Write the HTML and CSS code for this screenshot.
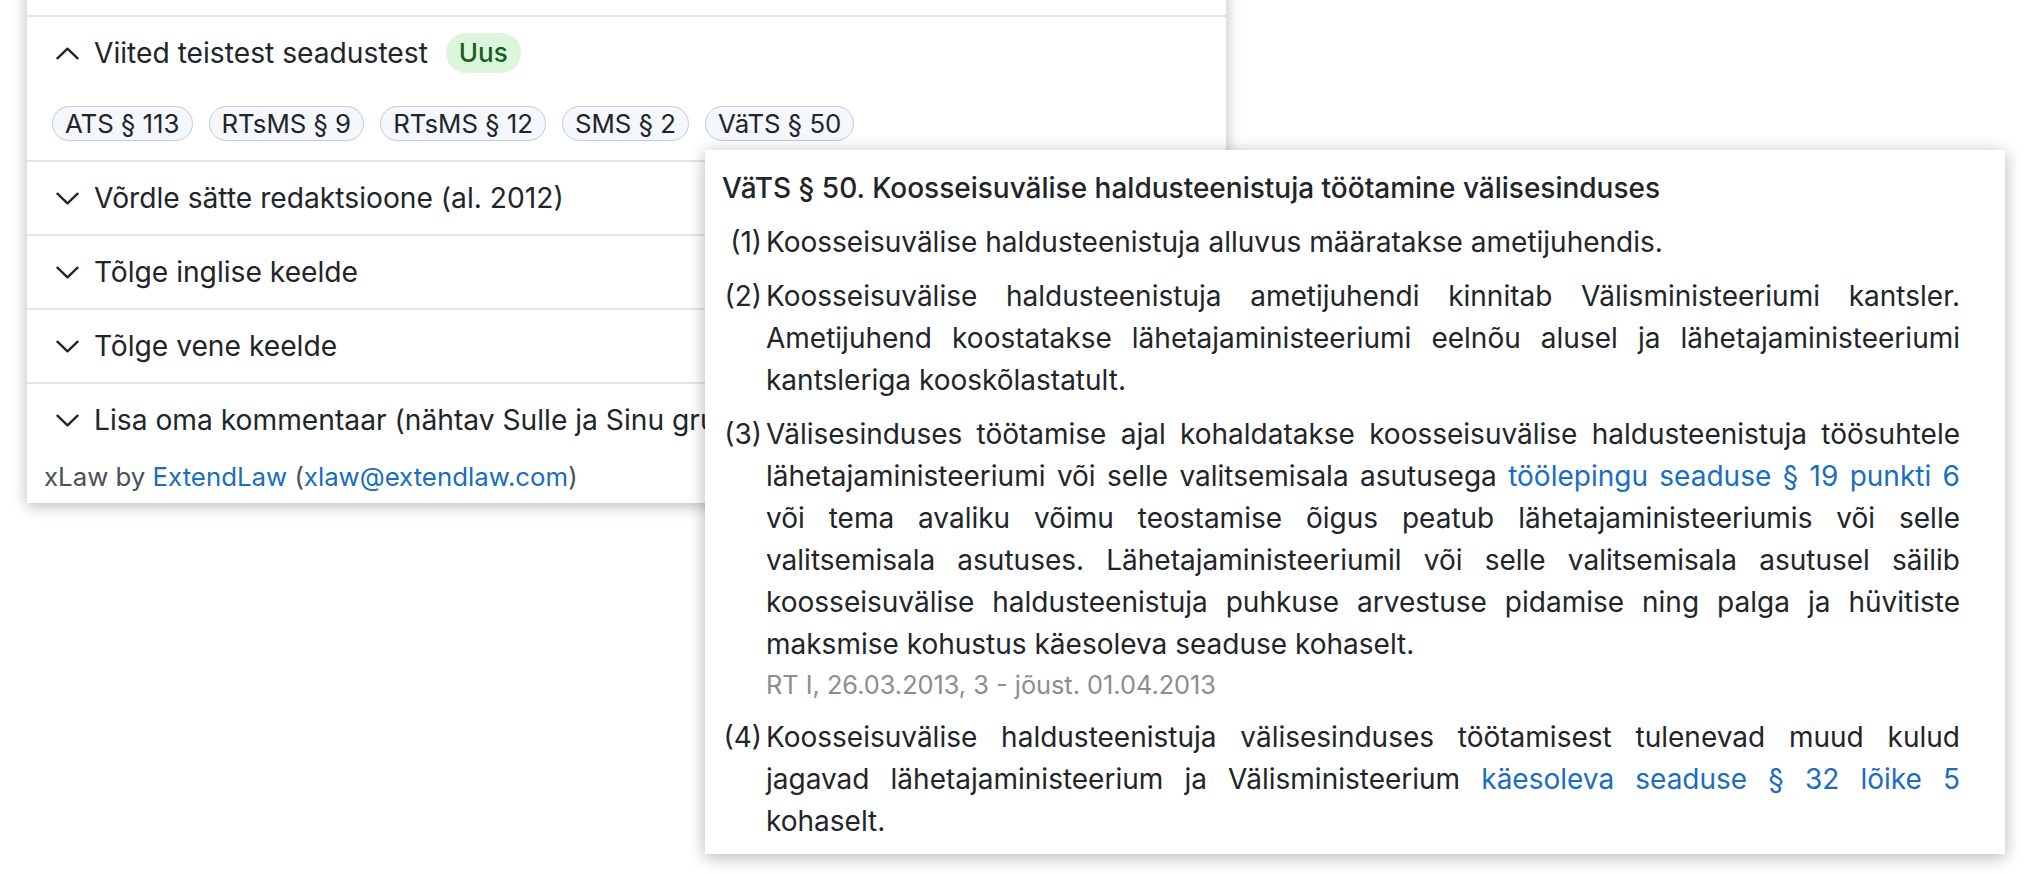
FILE: index.html
```html
<!DOCTYPE html>
<html lang="et">
<head>
<meta charset="utf-8">
<title>xLaw</title>
<link rel="stylesheet" href="styles.css">
</head>
<body>
<div class="page">
  <section class="panel">
    <div class="row row-tail"></div>
    <div class="row row-open">
      <div class="row-head">
        <svg class="chev" viewBox="0 0 24 13" aria-hidden="true"><polyline points="1.5,11.5 12,1.5 22.5,11.5"/></svg>
        <span class="row-title">Viited teistest seadustest</span>
        <span class="badge">Uus</span>
      </div>
      <div class="chips">
        <span class="chip">ATS § 113</span>
        <span class="chip">RTsMS § 9</span>
        <span class="chip">RTsMS § 12</span>
        <span class="chip">SMS § 2</span>
        <span class="chip chip-active">VäTS § 50</span>
      </div>
    </div>
    <div class="row">
      <div class="row-head">
        <svg class="chev" viewBox="0 0 24 13" aria-hidden="true"><polyline points="1.5,1.5 12,11.5 22.5,1.5"/></svg>
        <span class="row-title">Võrdle sätte redaktsioone (al. 2012)</span>
      </div>
    </div>
    <div class="row">
      <div class="row-head">
        <svg class="chev" viewBox="0 0 24 13" aria-hidden="true"><polyline points="1.5,1.5 12,11.5 22.5,1.5"/></svg>
        <span class="row-title">Tõlge inglise keelde</span>
      </div>
    </div>
    <div class="row">
      <div class="row-head">
        <svg class="chev" viewBox="0 0 24 13" aria-hidden="true"><polyline points="1.5,1.5 12,11.5 22.5,1.5"/></svg>
        <span class="row-title">Tõlge vene keelde</span>
      </div>
    </div>
    <div class="row row-last">
      <div class="row-head">
        <svg class="chev" viewBox="0 0 24 13" aria-hidden="true"><polyline points="1.5,1.5 12,11.5 22.5,1.5"/></svg>
        <span class="row-title">Lisa oma kommentaar (nähtav Sulle ja Sinu grupile)</span>
      </div>
    </div>
    <div class="footer">xLaw by <a href="#">ExtendLaw</a> (<a href="#">xlaw@extendlaw.com</a>)</div>
  </section>

  <div class="popover">
    <div class="pop-title">VäTS § 50. Koosseisuvälise haldusteenistuja töötamine välisesinduses</div>
    <div class="para">
      <span class="num">(1)</span>
      <div class="ptext">Koosseisuvälise haldusteenistuja alluvus määratakse ametijuhendis.</div>
    </div>
    <div class="para">
      <span class="num">(2)</span>
      <div class="ptext">Koosseisuvälise haldusteenistuja ametijuhendi kinnitab Välisministeeriumi kantsler. Ametijuhend koostatakse lähetajaministeeriumi eelnõu alusel ja lähetajaministeeriumi kantsleriga kooskõlastatult.</div>
    </div>
    <div class="para">
      <span class="num">(3)</span>
      <div class="ptext">Välisesinduses töötamise ajal kohaldatakse koosseisuvälise haldusteenistuja töösuhtele lähetajaministeeriumi või selle valitsemisala asutusega <a href="#">töölepingu seaduse § 19 punkti 6</a> või tema avaliku võimu teostamise õigus peatub lähetajaministeeriumis või selle valitsemisala asutuses. Lähetajaministeeriumil või selle valitsemisala asutusel säilib koosseisuvälise haldusteenistuja puhkuse arvestuse pidamise ning palga ja hüvitiste maksmise kohustus käesoleva seaduse kohaselt.
        <div class="note">RT I, 26.03.2013, 3 - jõust. 01.04.2013</div>
      </div>
    </div>
    <div class="para">
      <span class="num">(4)</span>
      <div class="ptext">Koosseisuvälise haldusteenistuja välisesinduses töötamisest tulenevad muud kulud jagavad lähetajaministeerium ja Välisministeerium <a href="#">käesoleva seaduse § 32 lõike 5</a> kohaselt.</div>
    </div>
  </div>
</div>
</body>
</html>
```
FILE: styles.css
```css
html, body {
  margin: 0;
  padding: 0;
  background: #ffffff;
}
body {
  font-family: Inter, "Noto Sans", "Liberation Sans", sans-serif;
  color: #212529;
  font-size: 28px;
  line-height: 42px;
}
a {
  color: #1a6dbf;
  text-decoration: none;
}
.page {
  position: relative;
  width: 2024px;
  height: 874px;
  overflow: hidden;
}
.panel {
  margin-left: 27px;
  margin-top: -20px;
  width: 1199px;
  background: #fff;
  box-shadow: 0 3px 14px rgba(0, 0, 0, 0.28);
}
.row {
  border-bottom: 2px solid #e3e5e8;
  height: 72px;
  display: flex;
  align-items: center;
  padding-left: 29px;
  box-sizing: content-box;
}
.row-tail {
  height: 35px;
}
.row-open {
  height: auto;
  display: block;
  padding: 16px 0 19px 0;
}
.row-last {
  border-bottom: none;
}
.row-head {
  display: flex;
  align-items: center;
  height: 40px;
  white-space: nowrap;
}
.row-open .row-head {
  padding-left: 29px;
}
.chev {
  width: 23px;
  height: 13px;
  margin-right: 15px;
  flex: none;
  fill: none;
  stroke: #212529;
  stroke-width: 2.5;
  stroke-linecap: round;
  stroke-linejoin: round;
}
.row-title {
  font-size: 28.2px;
}
.badge {
  margin-left: 18px;
  height: 40px;
  line-height: 40px;
  padding: 0 13px;
  border-radius: 20px;
  background: #dcf6dc;
  color: #1b5e20;
  font-size: 26px;
  font-weight: 500;
}
.chips {
  display: flex;
  gap: 16px;
  margin-top: 33px;
  padding-left: 25px;
}
.chip {
  height: 33px;
  line-height: 33px;
  padding: 0 12px;
  border: 1.5px solid #c1cbd8;
  border-radius: 18px;
  background: #f4f7fb;
  font-size: 25.8px;
  color: #212529;
}
.footer {
  padding: 0 17px 5px 17px;
  line-height: 42px;
  font-size: 25.8px;
  color: #495057;
}
.popover {
  position: absolute;
  left: 705px;
  top: 150px;
  width: 1300px;
  box-sizing: border-box;
  padding: 17px 45px 12px 17px;
  background: #fff;
  box-shadow: 0 3px 16px rgba(0, 0, 0, 0.3);
}
.pop-title {
  font-weight: 500;
  font-size: 28px;
  line-height: 42px;
}
.para {
  display: flex;
  margin-top: 12px;
}
.num {
  flex: none;
  width: 40px;
  margin-right: 4px;
  text-align: right;
}
.ptext {
  flex: 1;
  text-align: justify;
}
.note {
  font-size: 25.3px;
  line-height: 39px;
  color: #8a8d91;
  text-align: left;
}
```
